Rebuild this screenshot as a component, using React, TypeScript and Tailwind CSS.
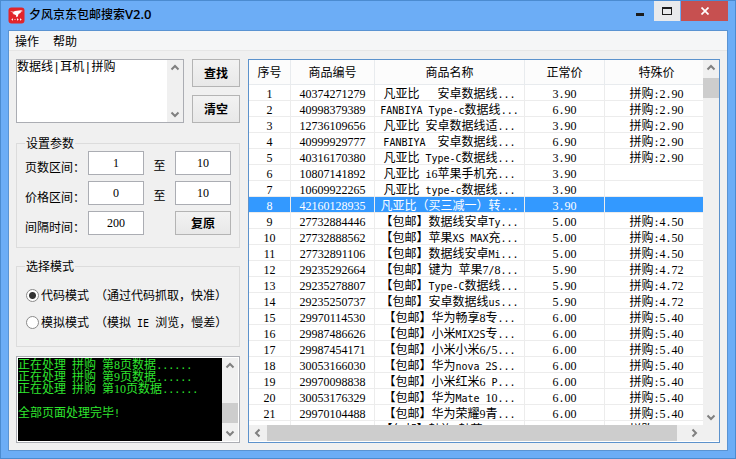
import { useState } from 'react'
import type { ReactNode } from 'react'

type Item = { no: number; id: string; name: string; price: string; special: string }

const items: Item[] = [
  { no: 1, id: '40374271279', name: '凡亚比   安卓数据线...', price: '3.90', special: '拼购:2.90' },
  { no: 2, id: '40998379389', name: 'FANBIYA Type-c数据线...', price: '6.90', special: '拼购:2.90' },
  { no: 3, id: '12736109656', name: '凡亚比 安卓数据线适...', price: '3.90', special: '拼购:2.90' },
  { no: 4, id: '40999929777', name: 'FANBIYA  安卓数据线...', price: '6.90', special: '拼购:2.90' },
  { no: 5, id: '40316170380', name: '凡亚比 Type-C数据线...', price: '3.90', special: '拼购:2.90' },
  { no: 6, id: '10807141892', name: '凡亚比 i6苹果手机充...', price: '3.90', special: '' },
  { no: 7, id: '10609922265', name: '凡亚比 type-c数据线...', price: '3.90', special: '' },
  { no: 8, id: '42160128935', name: '凡亚比（买三减一）转...', price: '3.90', special: '' },
  { no: 9, id: '27732884446', name: '【包邮】数据线安卓Ty...', price: '5.00', special: '拼购:4.50' },
  { no: 10, id: '27732888562', name: '【包邮】苹果XS MAX充...', price: '5.00', special: '拼购:4.50' },
  { no: 11, id: '27732891106', name: '【包邮】数据线安卓Mi...', price: '5.00', special: '拼购:4.50' },
  { no: 12, id: '29235292664', name: '【包邮】键为 苹果7/8...', price: '5.90', special: '拼购:4.72' },
  { no: 13, id: '29235278807', name: '【包邮】Type-C数据线...', price: '5.90', special: '拼购:4.72' },
  { no: 14, id: '29235250737', name: '【包邮】安卓数据线us...', price: '5.90', special: '拼购:4.72' },
  { no: 15, id: '29970114530', name: '【包邮】华为畅享8专...', price: '6.00', special: '拼购:5.40' },
  { no: 16, id: '29987486626', name: '【包邮】小米MIX2S专...', price: '6.00', special: '拼购:5.40' },
  { no: 17, id: '29987454171', name: '【包邮】小米小米6/5...', price: '6.00', special: '拼购:5.40' },
  { no: 18, id: '30053166030', name: '【包邮】华为nova 2S...', price: '6.00', special: '拼购:5.40' },
  { no: 19, id: '29970098838', name: '【包邮】小米红米6 P...', price: '6.00', special: '拼购:5.40' },
  { no: 20, id: '30053176329', name: '【包邮】华为Mate 10...', price: '6.00', special: '拼购:5.40' },
  { no: 21, id: '29970104488', name: '【包邮】华为荣耀9青...', price: '6.00', special: '拼购:5.40' },
  { no: 22, id: '29970107244', name: '【包邮】魅族 魅蓝 6T...', price: '6.00', special: '拼购:5.40' },
]

const logs = [
  '正在处理 拼购 第8页数据......',
  '正在处理 拼购 第9页数据......',
  '正在处理 拼购 第10页数据......',
  '',
  '全部页面处理完毕!',
]

// 半角字符宽度正好是汉字的一半：数字用衬线体，其余用等宽体
function Song({ children }: { children: string }) {
  return (
    <>
      {children.split(/(\d+|[\x20-\x2f\x3a-\x7e]+)/).map((part, i) => {
        if (i % 2 === 0) return part
        return /\d/.test(part) ? (
          <span key={i} className="font-['Liberation_Serif',serif]">{part}</span>
        ) : (
          <span key={i} className="font-['DejaVu_Sans_Mono',monospace] text-[10px]">{part}</span>
        )
      })}
    </>
  )
}

function Arrow({ dir }: { dir: 'up' | 'down' | 'left' | 'right' }) {
  const d = {
    up: 'M1.5 6.5 5 3l3.5 3.5',
    down: 'M1.5 3.5 5 7l3.5-3.5',
    left: 'M6.5 1.5 3 5l3.5 3.5',
    right: 'M3.5 1.5 7 5 3.5 8.5',
  }[dir]
  return (
    <svg width="10" height="10" viewBox="0 0 10 10" fill="none" stroke="#808080" strokeWidth="2">
      <path d={d} />
    </svg>
  )
}

// 竖向滚动条
function VScroll({ children }: { children?: ReactNode }) {
  return (
    <div className="flex w-4 shrink-0 flex-col bg-[#f0f0f0]">
      <button aria-label="向上滚动" className="flex h-4 shrink-0 items-center justify-center"><Arrow dir="up" /></button>
      <div className="flex min-h-0 flex-1 flex-col">{children}</div>
      <button aria-label="向下滚动" className="flex h-4 shrink-0 items-center justify-center"><Arrow dir="down" /></button>
    </div>
  )
}

function PushButton({ children, className, onClick }: { children: string; className: string; onClick?: () => void }) {
  return (
    <button
      onClick={onClick}
      className={`border border-[#b4b4b4] bg-gradient-to-b from-[#f2f2f2] to-[#e8e8e8] text-center font-bold hover:border-[#7eb4ea] ${className}`}
    >
      {children}
    </button>
  )
}

function NumberBox({ label, value, onChange }: { label: string; value: string; onChange: (v: string) => void }) {
  return (
    <input
      aria-label={label}
      value={value}
      onChange={(e) => onChange(e.target.value)}
      className="h-6 w-14 border border-[#abadb3] bg-white text-center font-['Liberation_Serif',serif] text-xs outline-none"
    />
  )
}

export default function App() {
  const [keyword, setKeyword] = useState('数据线|耳机|拼购')
  const [pages, setPages] = useState(['1', '10'])
  const [prices, setPrices] = useState(['0', '10'])
  const [delay, setDelay] = useState('200')
  const [mode, setMode] = useState('code')
  const [selected, setSelected] = useState(8)

  const reset = () => {
    setPages(['1', '10'])
    setPrices(['0', '10'])
    setDelay('200')
  }

  const modes = [
    { value: 'code', text: '代码模式 （通过代码抓取，快准）' },
    { value: 'mock', text: '模拟模式 （模拟 IE 浏览，慢差）' },
  ]

  return (
    <div className="flex h-screen flex-col border border-[#4b8bd0] bg-[#6cadf6] px-[7px] pb-[7px] font-['Noto_Sans_CJK_SC',sans-serif] text-xs text-black">
      {/* 标题栏 */}
      <header className="flex h-[29px] shrink-0 items-start">
        <div className="flex h-7 flex-1 items-center gap-1">
          <svg width="17" height="17" viewBox="0 0 17 17">
            <rect x="0.5" y="0.5" width="16" height="16" rx="3" fill="#e1252b" />
            <path d="M2 4.2 5.500 4.800 7 4l6-.8 2 .7-2.500.9.3.9-2.300 1.300-.7 2.500-1.500.8-.3-2L6 7.300 4.500 7l1.200-1z" fill="#fff" />
            <path d="M3.500 12.500h1.500M6.500 12.500h1M9 12.500h1.500M12 12.500h1.500M4.500 11.500v2M9.500 11.500v2M12.500 11.500v2" stroke="#fff" strokeWidth="0.800" />
          </svg>
          <h1 className="text-xs font-medium">夕风京东包邮搜索<span className="font-['Open_Sans',sans-serif] text-[13px] font-semibold">V2.0</span></h1>
        </div>
        <button aria-label="最小化" className="flex h-5 w-7 items-center justify-center">
          <span className="mt-1.5 h-[3px] w-2 bg-[#1c1c1c]" />
        </button>
        <button aria-label="最大化" className="flex h-5 w-[26px] items-center justify-center bg-[#e9eaec]">
          <span className="h-2 w-2.5 border border-t-2 border-[#1c1c1c]" />
        </button>
        <button aria-label="关闭" className="ml-px flex h-5 w-[47px] items-center justify-center bg-[#c75050]">
          <svg width="8" height="8" viewBox="0 0 8 8" stroke="#fff" strokeWidth="1.700">
            <path d="m.5.5 7 7M7.500.5l-7 7" />
          </svg>
        </button>
      </header>

      <div className="flex min-h-0 flex-1 flex-col border border-[#5a93d2] bg-[#f0f0f0]">
        <nav className="flex h-5 shrink-0 items-center gap-3.5 border-b border-[#e6e6e6] bg-[#f5f6f7] px-1.5">
          <button>操作</button>
          <button>帮助</button>
        </nav>

        <main className="flex min-h-0 flex-1 gap-2 px-[7px] pt-2 pb-[7px]">
          <aside className="flex w-56 shrink-0 flex-col">
            <div className="flex h-16 gap-2">
              <div className="flex flex-1 border border-[#abadb3] bg-white">
                <textarea
                  aria-label="关键词"
                  value={keyword}
                  onChange={(e) => setKeyword(e.target.value)}
                  className="min-w-0 flex-1 resize-none overflow-hidden font-['Liberation_Mono','Noto_Sans_CJK_SC',monospace] leading-4 outline-none"
                />
                <VScroll />
              </div>
              <div className="flex w-12 flex-col gap-2">
                <PushButton className="h-7">查找</PushButton>
                <PushButton className="h-7" onClick={() => setKeyword('')}>清空</PushButton>
              </div>
            </div>

            <fieldset className="mt-3 h-[113px] shrink-0 border border-[#dcdcdc] px-2">
              <legend className="px-px leading-4">设置参数</legend>
              <div className="flex flex-col gap-1.5">
                <div className="flex items-center">
                  <span className="w-[63px] pt-2">页数区间：</span>
                  <NumberBox label="起始页" value={pages[0]} onChange={(v) => setPages([v, pages[1]])} />
                  <span className="w-[31px] pt-1 text-center">至</span>
                  <NumberBox label="结束页" value={pages[1]} onChange={(v) => setPages([pages[0], v])} />
                </div>
                <div className="flex items-center">
                  <span className="w-[63px] pt-2">价格区间：</span>
                  <NumberBox label="最低价" value={prices[0]} onChange={(v) => setPrices([v, prices[1]])} />
                  <span className="w-[31px] pt-1 text-center">至</span>
                  <NumberBox label="最高价" value={prices[1]} onChange={(v) => setPrices([prices[0], v])} />
                </div>
                <div className="flex items-center">
                  <span className="w-[63px] pt-2">间隔时间：</span>
                  <NumberBox label="间隔时间" value={delay} onChange={setDelay} />
                  <PushButton className="ml-[31px] h-6 w-14" onClick={reset}>复原</PushButton>
                </div>
              </div>
            </fieldset>

            <fieldset className="mt-2.5 h-[89px] shrink-0 border border-[#dcdcdc] px-2">
              <legend className="px-px leading-4">选择模式</legend>
              <div className="flex flex-col gap-[9px] pt-3">
                {modes.map((m) => (
                  <label key={m.value} className="flex h-[18px] items-center gap-0.5 whitespace-pre">
                    <input
                      type="radio"
                      name="mode"
                      checked={mode === m.value}
                      onChange={() => setMode(m.value)}
                      className="ml-px size-[13px] appearance-none rounded-full border border-[#8a8a8a] bg-white checked:bg-[radial-gradient(circle,#333_3px,#fff_4px)]"
                    />
                    <span><Song>{m.text}</Song></span>
                  </label>
                ))}
              </div>
            </fieldset>

            {/* 运行日志 */}
            <div className="mt-[9px] flex min-h-0 flex-1 border border-[#abadb3] bg-white p-px">
              <div role="log" className="min-w-0 flex-1 overflow-hidden bg-black text-[#2fe62f]">
                {logs.map((line, i) => (
                  <p key={i} className="h-3 leading-3 whitespace-pre"><Song>{line}</Song></p>
                ))}
              </div>
              <VScroll>
                <div className="mt-auto mb-0.5 h-5 bg-[#cdcdcd]" />
              </VScroll>
            </div>
          </aside>

          {/* 商品列表 */}
          <section className="flex min-w-0 flex-1 flex-col border border-[#5c92cc] bg-white pb-px">
            <div className="flex min-h-0 flex-1">
              <div className="min-w-0 flex-1 overflow-hidden">
                <table className="w-full min-w-[460px] table-fixed border-separate border-spacing-0 text-center whitespace-pre">
                  <colgroup>
                    <col className="w-[42px]" />
                    <col className="w-[84px]" />
                    <col className="w-[150px]" />
                    <col className="w-20" />
                    <col />
                  </colgroup>
                  <thead>
                    <tr className="h-[25px] bg-[#fcfcfc]">
                      {['序号', '商品编号', '商品名称', '正常价', '特殊价'].map((h) => (
                        <th key={h} className="border-r border-b border-[#e8ebee] p-0 leading-5 font-normal">{h}</th>
                      ))}
                    </tr>
                  </thead>
                  <tbody>
                    {items.map((it) => (
                      <tr
                        key={it.no}
                        onClick={() => setSelected(it.no)}
                        className={it.no === selected ? 'bg-[#3399ff] text-white' : 'bg-white'}
                      >
                        {[String(it.no), it.id, it.name, it.price, it.special].map((cell, i) => (
                          <td key={i} className="h-4 overflow-hidden border-r border-b border-[#ececec] p-0 leading-[15px]">
                            <div className="h-[15px]"><Song>{cell}</Song></div>
                          </td>
                        ))}
                      </tr>
                    ))}
                  </tbody>
                </table>
              </div>
              <VScroll>
                <div className="mt-0.5 h-5 bg-[#cdcdcd]" />
              </VScroll>
            </div>
            <div className="flex h-4 shrink-0 bg-[#f0f0f0] pr-4">
              <button aria-label="向左滚动" className="flex w-[18px] items-center justify-center"><Arrow dir="left" /></button>
              <div className="flex-1 bg-[#cdcdcd]" />
              <button aria-label="向右滚动" className="ml-2 flex w-[18px] items-center justify-center"><Arrow dir="right" /></button>
            </div>
          </section>
        </main>
      </div>
    </div>
  )
}
